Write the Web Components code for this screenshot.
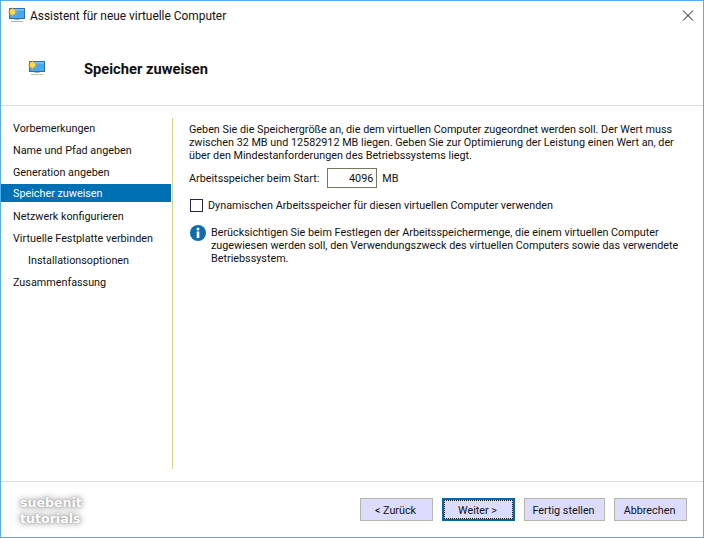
<!DOCTYPE html>
<html lang="de">
<head>
<meta charset="utf-8">
<title>Assistent</title>
<style>
html, body { margin: 0; padding: 0; height: 100%; background: #fff; }
body { font-family: Roboto, "Noto Sans", sans-serif; font-size: 10.800px; color: #111; overflow: hidden; }
</style>
</head>
<body>
<wizard-window>
  <wizard-title slot="title">Assistent für neue virtuelle Computer</wizard-title>
  <wizard-header slot="header">Speicher zuweisen</wizard-header>
  <wizard-nav slot="nav">
    <nav-item>Vorbemerkungen</nav-item>
    <nav-item>Name und Pfad angeben</nav-item>
    <nav-item>Generation angeben</nav-item>
    <nav-item active>Speicher zuweisen</nav-item>
    <nav-item>Netzwerk konfigurieren</nav-item>
    <nav-item>Virtuelle Festplatte verbinden</nav-item>
    <nav-item sub>Installationsoptionen</nav-item>
    <nav-item>Zusammenfassung</nav-item>
  </wizard-nav>
  <memory-page slot="content"></memory-page>
  <wizard-footer slot="footer"></wizard-footer>
</wizard-window>

<script>
// same monitor for the title bar and the header, only the foot differs
const monitorIcon = (foot, footY) => `
<svg width="17" height="16" viewBox="0 0 17 16">
  <rect x="1.500" y=".5" width="15" height="10" fill="#4aa8ee" stroke="#2a6fb0"/>
  <rect x="2" y="1" width="14" height="1.500" fill="#7cc6f5"/>
  <path d="M4.500 -.5v9M0 4h9M1.300 .8l6.400 6.400M7.700 .8l-6.400 6.400" stroke="#f0a92a" stroke-width="1"/>
  <circle cx="4.500" cy="4" r="2.700" fill="#fcdc4e"/>
  <rect x="6.500" y="11" width="5" height="1" fill="#9fb4c2"/>
  <rect x="3" y="${footY}" width="12" height="1" fill="${foot}"/>
</svg>`;

class WizardWindow extends HTMLElement {
  connectedCallback() {
    this.attachShadow({ mode: "open" }).innerHTML = `
<style>
:host { display: flex; flex-direction: column; box-sizing: border-box; width: 704px; height: 538px; border: 1px solid #4fb0f4; background: #fff; }
.body { flex: 1; display: flex; min-height: 0; }
</style>
<slot name="title"></slot>
<slot name="header"></slot>
<div class="body">
  <slot name="nav"></slot>
  <slot name="content"></slot>
</div>
<slot name="footer"></slot>`;
  }
}

class WizardTitle extends HTMLElement {
  connectedCallback() {
    this.attachShadow({ mode: "open" }).innerHTML = `
<style>
:host { display: flex; align-items: center; height: 30px; padding-left: 7px; flex-shrink: 0; }
svg { display: block; overflow: visible; }
.t { margin-left: 5px; font-size: 11.900px; }
.x { margin: 0 10px 1px auto; width: 10px; height: 11px; }
</style>
${monitorIcon("#a9b4bc", 13)}
<span class="t"><slot></slot></span>
<svg class="x" viewBox="0 0 10 11"><path d="M0 .5l10 10M10 .5l-10 10" stroke="#111" fill="none"/></svg>`;
  }
}

class WizardHeader extends HTMLElement {
  connectedCallback() {
    this.attachShadow({ mode: "open" }).innerHTML = `
<style>
:host { display: flex; align-items: center; height: 75px; padding-left: 27px; flex-shrink: 0; border-bottom: 1px solid #dcdcf5; box-sizing: border-box; }
svg { display: block; overflow: visible; margin-top: 2px; }
.h { margin-left: 39px; padding-top: 1px; font-size: 14.700px; font-weight: 700; color: #111; }
</style>
${monitorIcon("#a9d49a", 13)}
<span class="h"><slot></slot></span>`;
  }
}

class WizardNav extends HTMLElement {
  connectedCallback() {
    this.attachShadow({ mode: "open" }).innerHTML = `
<style>
:host { display: flex; flex-direction: column; width: 170px; padding-top: 11px; flex-shrink: 0; box-sizing: border-box; }
</style>
<slot></slot>`;
  }
}

class NavItem extends HTMLElement {
  connectedCallback() {
    this.attachShadow({ mode: "open" }).innerHTML = `
<style>
:host { display: flex; align-items: center; height: 22px; padding-left: 12px; white-space: nowrap; }
:host([active]) { background: #0070b4; color: #fff; height: 17px; padding-top: 1px; margin: 1px 0 3px; }
:host([sub]) { padding-left: 27px; }
</style>
<slot></slot>`;
  }
}

class MemoryPage extends HTMLElement {
  connectedCallback() {
    this.attachShadow({ mode: "open" }).innerHTML = `
<style>
:host { flex: 1; display: flex; min-width: 0; padding: 12px 0 12px 1px; }
.panel { flex: 1; border-left: 1px solid #d5d58c; padding: 5px 0 0 16px; }
p { margin: 0; line-height: 13px; white-space: nowrap; }
.row { display: flex; align-items: center; margin-top: 6px; }
.field { box-sizing: border-box; width: 50px; height: 20px; margin-left: 8px; margin-right: 5px; border: 1px solid #77775f; display: flex; align-items: center; justify-content: flex-end; padding-right: 3px; }
.check { margin-top: 11px; }
.box { box-sizing: border-box; width: 13px; height: 13px; border: 1px solid #26264a; margin: 0 5px 0 1px; }
.info { display: flex; margin-top: 13px; }
.info svg { flex-shrink: 0; margin: 0 5px 0 1px; }
.info p { padding-top: 1px; }
</style>
<div class="panel">
  <p>Geben Sie die Speichergröße an, die dem virtuellen Computer zugeordnet werden soll. Der Wert muss<br>zwischen 32 MB und 12582912 MB liegen. Geben Sie zur Optimierung der Leistung einen Wert an, der<br>über den Mindestanforderungen des Betriebssystems liegt.</p>
  <div class="row"><span>Arbeitsspeicher beim Start:</span><span class="field">4096</span><span>MB</span></div>
  <div class="row check"><span class="box"></span><span>Dynamischen Arbeitsspeicher für diesen virtuellen Computer verwenden</span></div>
  <div class="info">
    <svg width="16" height="16" viewBox="0 0 16 16"><circle cx="8" cy="8" r="8" fill="#0f6cb0"/><circle cx="8" cy="4" r="1.500" fill="#fff"/><rect x="6.700" y="6.500" width="2.600" height="6.500" fill="#fff"/></svg>
    <p>Berücksichtigen Sie beim Festlegen der Arbeitsspeichermenge, die einem virtuellen Computer<br>zugewiesen werden soll, den Verwendungszweck des virtuellen Computers sowie das verwendete<br>Betriebssystem.</p>
  </div>
</div>`;
  }
}

class WizardFooter extends HTMLElement {
  connectedCallback() {
    this.attachShadow({ mode: "open" }).innerHTML = `
<style>
:host { display: flex; align-items: center; height: 56px; flex-shrink: 0; border-top: 1px solid #dcdcf5; box-sizing: border-box; padding: 0 16px 0 19px; }
.mark { color: #fcfcfc; font-weight: 700; font-size: 12.600px; line-height: 16px; margin-top: 2px; text-shadow: 0 0 2px #999, 0 0 6px #999, 0 0 9px #bbb; font-family: "DejaVu Sans", sans-serif; }
.btns { margin-left: auto; display: flex; gap: 9px; }
button { box-sizing: border-box; height: 23px; font: inherit; color: inherit; background: #dcdcff; border: 1px solid #b5b5a8; padding: 1px 2px 0 0; margin: 0; }
.def { border: 2px solid #0068a8; outline: 1px dotted #111; outline-offset: -3px; }
</style>
<div class="mark">suebenit<br>tutorials</div>
<div class="btns">
  <button style="width:73px">&lt; Zurück</button>
  <button class="def" style="width:73px">Weiter &gt;</button>
  <button style="width:81px">Fertig stellen</button>
  <button style="width:73px">Abbrechen</button>
</div>`;
  }
}

customElements.define("wizard-window", WizardWindow);
customElements.define("wizard-title", WizardTitle);
customElements.define("wizard-header", WizardHeader);
customElements.define("wizard-nav", WizardNav);
customElements.define("nav-item", NavItem);
customElements.define("memory-page", MemoryPage);
customElements.define("wizard-footer", WizardFooter);
</script>
</body>
</html>
